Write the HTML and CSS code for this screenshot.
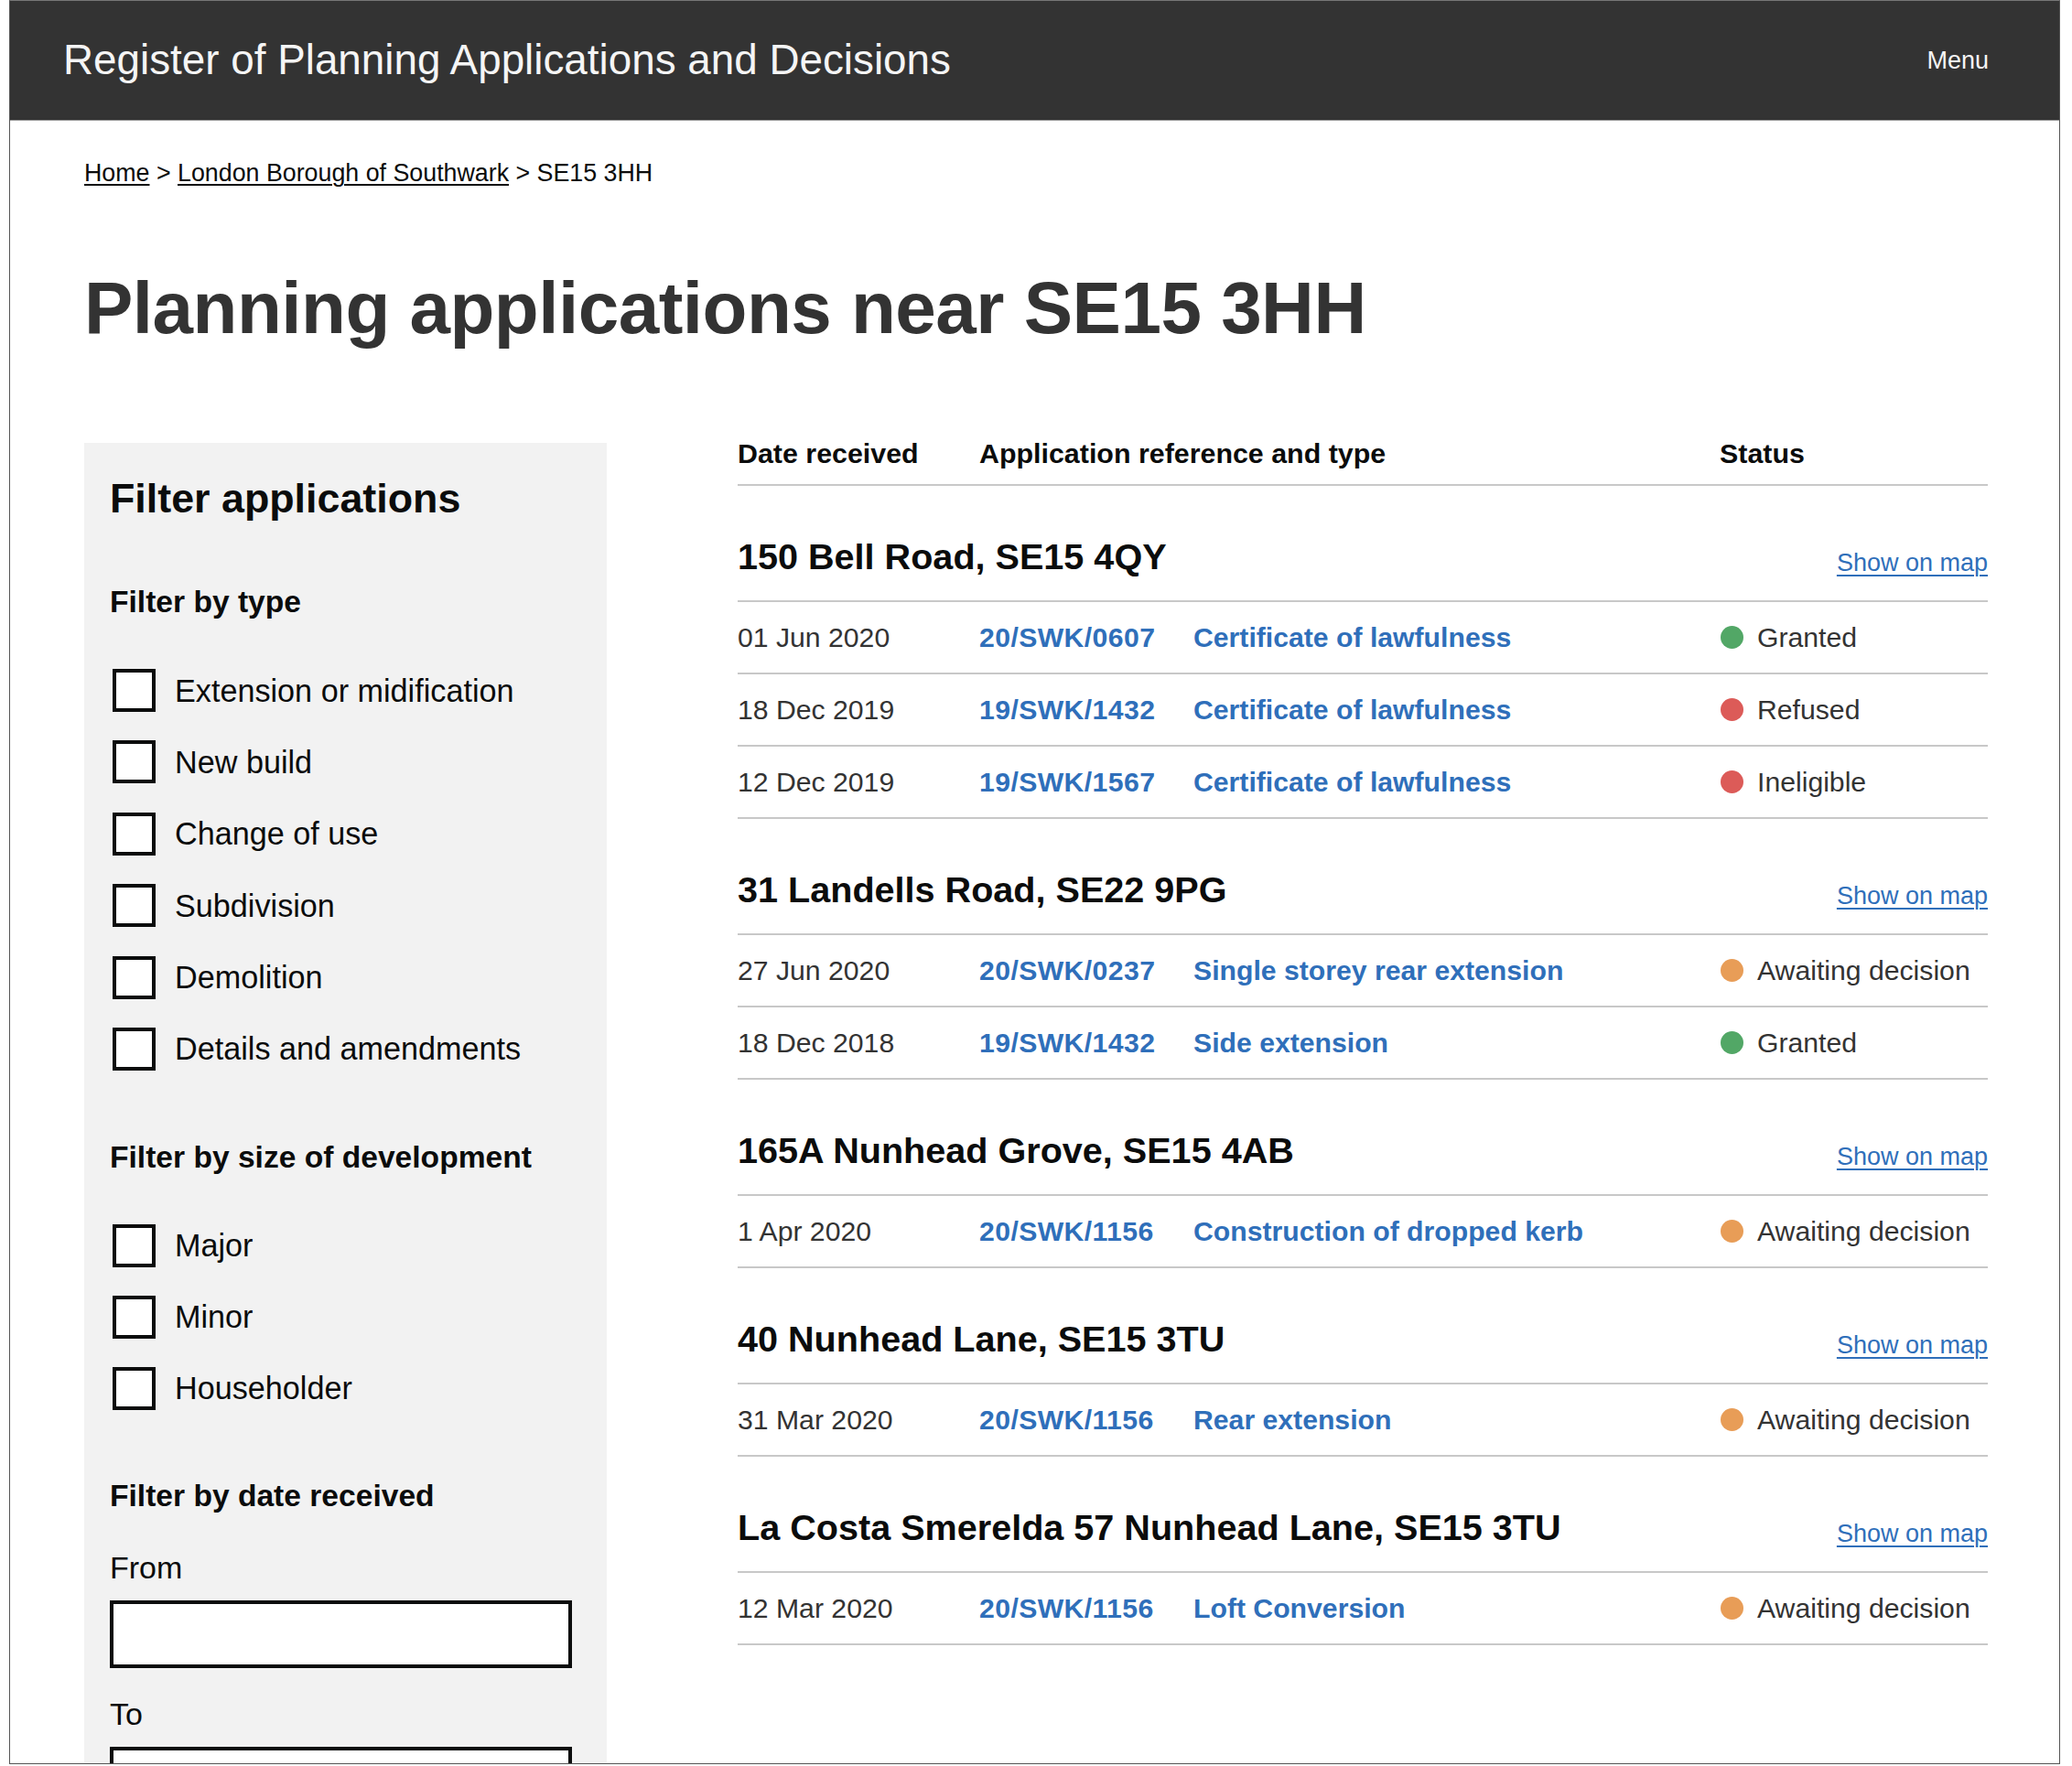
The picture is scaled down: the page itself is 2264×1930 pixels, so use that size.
FILE: index.html
```html
<!DOCTYPE html>
<html lang="en">
<head>
<meta charset="utf-8">
<title>Planning applications near SE15 3HH</title>
<link rel="stylesheet" href="styles.css">
</head>
<body>
<div class="frame">
  <header class="site-header">
    <span class="site-title">Register of Planning Applications and Decisions</span>
    <a class="menu" href="#">Menu</a>
  </header>
  <main class="main">
    <nav class="breadcrumbs"><a href="#">Home</a> &gt; <a href="#">London Borough of Southwark</a> &gt; SE15 3HH</nav>
    <h1 class="page-title">Planning applications near SE15 3HH</h1>
    <div class="layout">
      <aside class="filters">
        <h2 class="filters-title">Filter applications</h2>
        <h3 class="filter-heading">Filter by type</h3>
        <ul class="checks">
          <li class="check"><span class="box"></span><span>Extension or midification</span></li>
          <li class="check"><span class="box"></span><span>New build</span></li>
          <li class="check"><span class="box"></span><span>Change of use</span></li>
          <li class="check"><span class="box"></span><span>Subdivision</span></li>
          <li class="check"><span class="box"></span><span>Demolition</span></li>
          <li class="check"><span class="box"></span><span>Details and amendments</span></li>
        </ul>
        <h3 class="filter-heading size-heading">Filter by size of development</h3>
        <ul class="checks checks-size">
          <li class="check"><span class="box"></span><span>Major</span></li>
          <li class="check"><span class="box"></span><span>Minor</span></li>
          <li class="check"><span class="box"></span><span>Householder</span></li>
        </ul>
        <h3 class="filter-heading date-heading">Filter by date received</h3>
        <div class="field-label">From</div>
        <div class="text-input"></div>
        <div class="field-label field-label-to">To</div>
        <div class="text-input"></div>
      </aside>
      <section class="results">
        <div class="results-head cols">
          <span>Date received</span>
          <span class="span2">Application reference and type</span>
          <span>Status</span>
        </div>

        <div class="group">
          <div class="group-head"><h2 class="address">150 Bell Road, SE15 4QY</h2><a class="map-link" href="#">Show on map</a></div>
          <div class="row cols"><span class="date">01 Jun 2020</span><a class="ref" href="#">20/SWK/0607</a><a class="type" href="#">Certificate of lawfulness</a><span class="status"><span class="dot dot-granted"></span>Granted</span></div>
          <div class="row cols"><span class="date">18 Dec 2019</span><a class="ref" href="#">19/SWK/1432</a><a class="type" href="#">Certificate of lawfulness</a><span class="status"><span class="dot dot-refused"></span>Refused</span></div>
          <div class="row cols"><span class="date">12 Dec 2019</span><a class="ref" href="#">19/SWK/1567</a><a class="type" href="#">Certificate of lawfulness</a><span class="status"><span class="dot dot-refused"></span>Ineligible</span></div>
        </div>

        <div class="group">
          <div class="group-head"><h2 class="address">31 Landells Road, SE22 9PG</h2><a class="map-link" href="#">Show on map</a></div>
          <div class="row cols"><span class="date">27 Jun 2020</span><a class="ref" href="#">20/SWK/0237</a><a class="type" href="#">Single storey rear extension</a><span class="status"><span class="dot dot-awaiting"></span>Awaiting decision</span></div>
          <div class="row cols"><span class="date">18 Dec 2018</span><a class="ref" href="#">19/SWK/1432</a><a class="type" href="#">Side extension</a><span class="status"><span class="dot dot-granted"></span>Granted</span></div>
        </div>

        <div class="group">
          <div class="group-head"><h2 class="address">165A Nunhead Grove, SE15 4AB</h2><a class="map-link" href="#">Show on map</a></div>
          <div class="row cols"><span class="date">1 Apr 2020</span><a class="ref" href="#">20/SWK/1156</a><a class="type" href="#">Construction of dropped kerb</a><span class="status"><span class="dot dot-awaiting"></span>Awaiting decision</span></div>
        </div>

        <div class="group">
          <div class="group-head"><h2 class="address">40 Nunhead Lane, SE15 3TU</h2><a class="map-link" href="#">Show on map</a></div>
          <div class="row cols"><span class="date">31 Mar 2020</span><a class="ref" href="#">20/SWK/1156</a><a class="type" href="#">Rear extension</a><span class="status"><span class="dot dot-awaiting"></span>Awaiting decision</span></div>
        </div>

        <div class="group">
          <div class="group-head"><h2 class="address">La Costa Smerelda 57 Nunhead Lane, SE15 3TU</h2><a class="map-link" href="#">Show on map</a></div>
          <div class="row cols"><span class="date">12 Mar 2020</span><a class="ref" href="#">20/SWK/1156</a><a class="type" href="#">Loft Conversion</a><span class="status"><span class="dot dot-awaiting"></span>Awaiting decision</span></div>
        </div>
      </section>
    </div>
  </main>
</div>
</body>
</html>
```

FILE: styles.css
```css
* { box-sizing: border-box; }

html, body {
  margin: 0;
  padding: 0;
  background: #ffffff;
}

body {
  font-family: "Liberation Sans", Arial, Helvetica, sans-serif;
  color: #0b0c0c;
}

a { color: inherit; }

.frame {
  margin-left: 10px;
  width: 2241px;
  height: 1928px;
  border: 1px solid #555555;
  border-top-color: #777777;
  overflow: hidden;
  background: #ffffff;
}

/* Header */
.site-header {
  height: 131px;
  background: #333333;
  border-bottom: 1px solid #9a9a9a;
  display: flex;
  align-items: center;
  justify-content: space-between;
  padding: 0 77px 0 58px;
}

.site-title {
  color: #f5f5f5;
  font-size: 45.8px;
  line-height: 1;
  font-weight: 400;
}

.menu {
  color: #f5f5f5;
  font-size: 27px;
  text-decoration: none;
}

/* Main */
.main {
  padding: 41px 78px 0 81px;
}

.breadcrumbs {
  font-size: 26.8px;
  line-height: 32px;
  color: #0b0c0c;
}

.breadcrumbs a {
  color: #0b0c0c;
  text-decoration: underline;
  text-underline-offset: 3px;
  text-decoration-thickness: 1.5px;
}

.page-title {
  margin: 88px 0 0;
  font-size: 80px;
  line-height: 88px;
  font-weight: 700;
  color: #333333;
  letter-spacing: -0.5px;
}

.layout {
  display: flex;
  align-items: flex-start;
  gap: 143px;
  margin-top: 96px;
}

/* Filters */
.filters {
  flex: 0 0 571px;
  margin-top: 7px;
  background: #f2f2f2;
  padding: 34px 38px 120px 28px;
}

.filters-title {
  margin: 0;
  font-size: 44.8px;
  line-height: 52px;
  font-weight: 700;
}

.filter-heading {
  margin: 69px 0 0;
  font-size: 33.6px;
  line-height: 38px;
  font-weight: 700;
}

.size-heading { margin-top: 76px; }
.date-heading { margin-top: 75px; }

.checks {
  list-style: none;
  margin: 54px 0 0 3px;
  padding: 0;
  display: flex;
  flex-direction: column;
  gap: 31.4px;
}

.checks-size {
  margin-top: 54px;
  gap: 31px;
}

.check {
  display: flex;
  align-items: center;
  gap: 21px;
  font-size: 34.2px;
  line-height: 40px;
  height: 47px;
}

.box {
  flex: 0 0 47px;
  width: 47px;
  height: 47px;
  border: 4px solid #0b0c0c;
  background: #ffffff;
}

.field-label {
  margin-top: 39px;
  font-size: 34px;
  line-height: 40px;
}

.field-label-to { margin-top: 30px; }

.text-input {
  margin-top: 16px;
  width: 505px;
  height: 74px;
  border: 4px solid #0b0c0c;
  background: #ffffff;
}

/* Results */
.results {
  flex: 1 1 auto;
  min-width: 0;
}

.cols {
  display: grid;
  grid-template-columns: 264px 234px 575px 1fr;
  align-items: center;
}

.span2 { grid-column: span 2; }

.results-head {
  font-size: 30.4px;
  line-height: 36px;
  font-weight: 700;
  padding-bottom: 16px;
  border-bottom: 2px solid #c8c8c8;
}

.group-head {
  display: flex;
  justify-content: space-between;
  align-items: baseline;
  padding: 53px 0 24px;
  border-bottom: 2px solid #c8c8c8;
}

.address {
  margin: 0;
  font-size: 39.6px;
  line-height: 48px;
  font-weight: 700;
}

.map-link {
  font-size: 27px;
  color: #2f6fba;
  text-decoration: underline;
  text-underline-offset: 4px;
  text-decoration-thickness: 1.5px;
  position: relative;
  top: 2px;
}

.row {
  height: 79px;
  border-bottom: 2px solid #c8c8c8;
  font-size: 30.2px;
  line-height: 36px;
}

.date { color: #333333; }

.ref, .type {
  color: #2f6fba;
  font-weight: 700;
  text-decoration: none;
}

.ref { letter-spacing: 0.4px; }

.status {
  display: flex;
  align-items: center;
  gap: 15px;
  color: #333333;
  padding-left: 1px;
}

.dot {
  flex: 0 0 25px;
  width: 25px;
  height: 25px;
  border-radius: 50%;
}

.dot-granted { background: #52a766; }
.dot-refused { background: #dc5b58; }
.dot-awaiting { background: #e89d57; }
```
